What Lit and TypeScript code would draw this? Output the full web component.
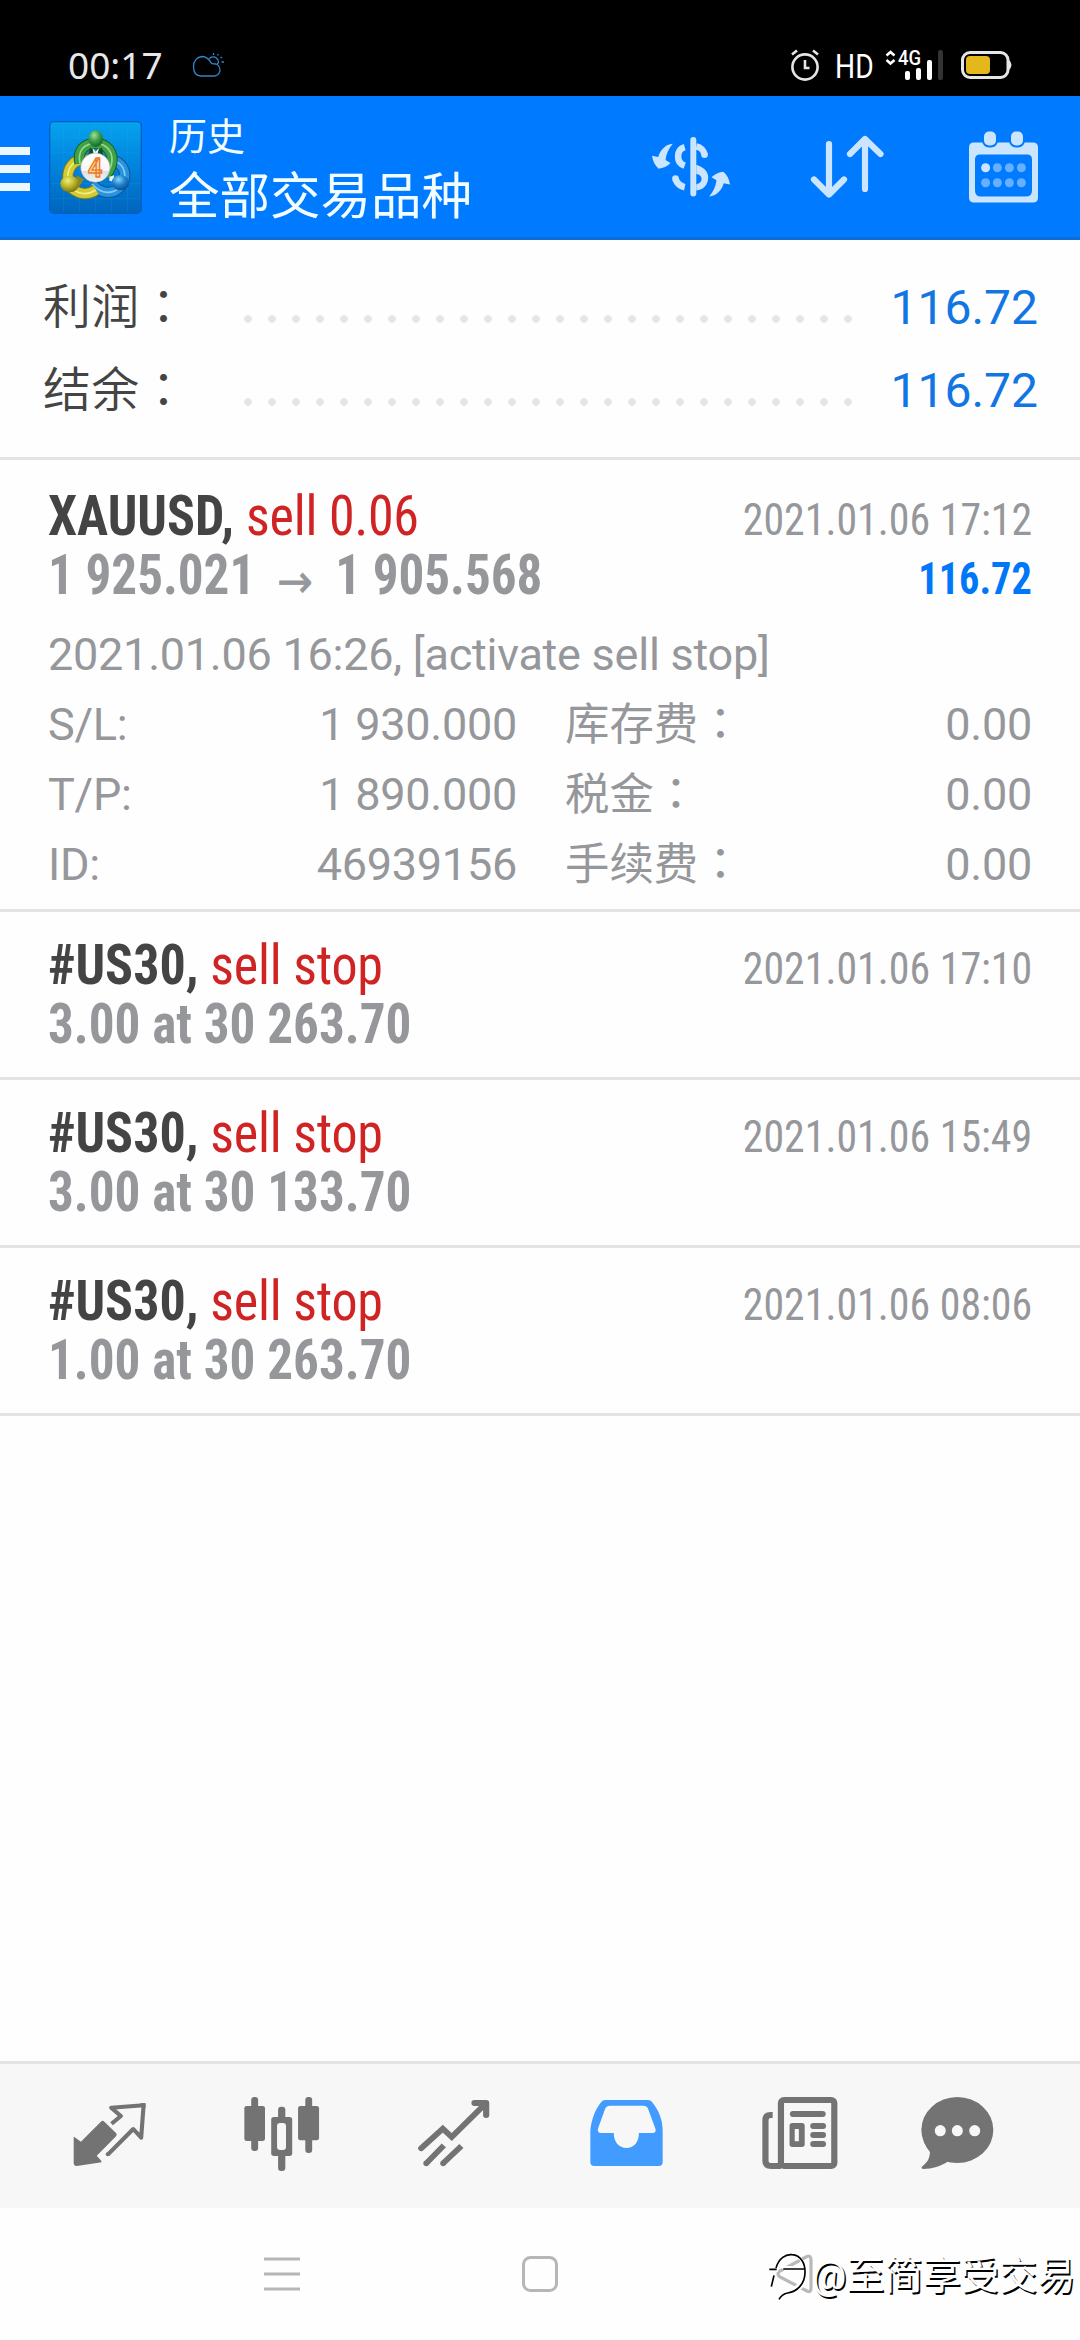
import { LitElement, html, css, svg, nothing } from "lit";
import { customElement, property } from "lit/decorators.js";

interface Order {
  symbol: string;
  action: string;
  price: string;
  time: string;
  profit?: string;
  target?: string;
}

const orders: Order[] = [
  { symbol: "#US30,", action: "sell stop", price: "3.00 at 30 263.70", time: "2021.01.06 17:10" },
  { symbol: "#US30,", action: "sell stop", price: "3.00 at 30 133.70", time: "2021.01.06 15:49" },
  { symbol: "#US30,", action: "sell stop", price: "1.00 at 30 263.70", time: "2021.01.06 08:06" },
];

const base = css`
  :host { display: block; font-family: Roboto, "Noto Sans CJK SC", sans-serif; }
  * { box-sizing: border-box; }
  svg { display: block; flex: none; overflow: visible; }
`;

@customElement("status-bar")
class StatusBar extends LitElement {
  static styles = [base, css`
    .bar { height: 96px; background: #000; display: flex; align-items: center; padding: 34px 69px 0 68px; color: #e8e8e8; }
    .time { font: 37px/62px "Noto Sans", sans-serif; width: 97px; margin-right: 27px; }
    .right { margin-left: auto; display: flex; align-items: center; }
    .hd { width: 36px; margin: 2px 14px 0 16px; color: #fff; font-size: 34px; line-height: 40px; }
    .hd span { display: inline-block; transform: scaleX(0.83); transform-origin: 0 50%; }
    .g { font: 500 20px Roboto, sans-serif; fill: #fff; }
    .battery { margin-left: 18px; }
  `];
  render() {
    return html`<div class="bar">
      <span class="time">00:17</span>
      <svg width="33" height="26" viewBox="0 0 33 26" fill="none" stroke="#2f86c6" stroke-width="1.3">
        <path d="M9 24 C4 24 1.5 20 1.5 14.5 C1.5 9 5 5 10 4.500 C14 4.500 16 6.500 18 9 C19 12 21 12 24 12 C27 13 28 16 28 19 C27 22 25 24 22 24Z"/>
        <path d="M17 7 C19 4 24 4 26 8 C27 10 26 12 25 12 M21.500 1 V3 M26.500 2 L25.500 3.500 M30 5 L28.500 6 M29.500 10 H32"/>
      </svg>
      <div class="right">
        <svg width="28" height="32" viewBox="0 0 28 32" fill="none" stroke="#e6e6e6" stroke-width="2.600">
          <circle cx="14" cy="18" r="12.600"/>
          <path d="M14 11 V19 H18.500 M1 5.500 L6 1.500 M27 5.500 L22 1.500"/>
        </svg>
        <div class="hd"><span>HD</span></div>
        <svg width="58" height="32" viewBox="0 0 58 32">
          <path d="M1.500 6.500 L5.500 3 L9.500 6.500 M1.500 11 L5.500 14.500 L9.500 11" fill="none" stroke="#fff" stroke-width="2.600"/>
          <text class="g" x="13" y="16" textLength="23" lengthAdjust="spacingAndGlyphs">4G</text>
          <rect x="20" y="22" width="5" height="9" rx="2" fill="#fff"/>
          <rect x="31" y="19" width="5" height="12" rx="2" fill="#fff"/>
          <rect x="42" y="11" width="5" height="20" rx="2" fill="#fff"/>
          <rect x="53" y="1" width="5" height="30" rx="2" fill="#333"/>
        </svg>
        <svg class="battery" width="50" height="28" viewBox="0 0 50 28">
          <rect x="1.500" y="1.500" width="45.500" height="25" rx="7.500" fill="none" stroke="#e6e6e6" stroke-width="3"/>
          <path d="M47.500 8.500 Q50.500 11 50.500 14 Q50.500 17 47.500 19.500Z" fill="#e6e6e6"/>
          <rect x="5" y="5" width="24" height="18" rx="4" fill="#e4b71c"/>
        </svg>
      </div>
    </div>`;
  }
}

@customElement("app-header")
class AppHeader extends LitElement {
  static styles = [base, css`
    .header { height: 144px; background: #007aff; border-bottom: 3px solid #0b6dd8; display: flex; align-items: center; color: #f2fdff; }
    .menu { width: 30px; display: flex; flex-direction: column; gap: 10px; margin: 5px 19px 0 0; }
    .menu i { height: 8px; background: #ecf7ff; }
    .titles { align-self: flex-start; margin: 12px 0 0 27px; display: flex; flex-direction: column; white-space: nowrap; width: 483px; }
    .sub { font-size: 38px; line-height: 58px; }
    .main { font-size: 50.500px; line-height: 62px; }
    .logo { margin-top: 1px; }
    .four { font: 700 75px Roboto, sans-serif; fill: #fcd9ab; stroke: #ee7a1e; stroke-width: 4px; }
    .sort { margin: 0 85px 0 80px; }
  `];
  render() {
    const ribbon = (d: string, dark: string, mid: string, light: string) => svg`
      <path d=${d} stroke=${dark} stroke-width="34"/>
      <path d=${d} stroke=${mid} stroke-width="28"/>
      <path d=${d} stroke=${light} stroke-width="5" stroke-opacity=".75"/>`;
    const arrow = "M96 54 C74 56 58 72 52 94 L33 90 C35 106 42 120 53 129 C66 128 80 122 89 112 L74 103 C76 84 84 68 96 54Z";
    return html`<div class="header">
      <div class="menu"><i></i><i></i><i></i></div>
      <svg class="logo" width="93" height="93" viewBox="27 29 279 279">
        <defs>
          <linearGradient id="bg" x1="0" y1="0" x2="0" y2="1"><stop offset="0" stop-color="#06a3ee"/><stop offset=".5" stop-color="#0082dc"/><stop offset="1" stop-color="#0065bd"/></linearGradient>
          <radialGradient id="gr" cx=".4" cy=".3" r=".7"><stop offset="0" stop-color="#9be39a"/><stop offset=".5" stop-color="#3fa14c"/><stop offset="1" stop-color="#17642b"/></radialGradient>
          <radialGradient id="ye" cx=".4" cy=".3" r=".7"><stop offset="0" stop-color="#f1ee7c"/><stop offset=".5" stop-color="#bfb82c"/><stop offset="1" stop-color="#77751a"/></radialGradient>
          <radialGradient id="bl" cx=".4" cy=".3" r=".7"><stop offset="0" stop-color="#8bd4fb"/><stop offset=".5" stop-color="#2187cf"/><stop offset="1" stop-color="#0a4f94"/></radialGradient>
          <linearGradient id="wh" x1="0" y1="0" x2="0" y2="1"><stop offset="0" stop-color="#fff"/><stop offset=".6" stop-color="#f6f6f6"/><stop offset=".62" stop-color="#dedede"/><stop offset="1" stop-color="#f4f4f4"/></linearGradient>
        </defs>
        <rect x="29" y="31" width="275" height="275" rx="13" fill="url(#bg)" stroke="#0560bd" stroke-width="4"/>
        <path d="M70 33 V304 M118 33 V304 M167 33 V304 M215 33 V304 M262 33 V304 M31 78 H302 M31 124 H302 M31 170 H302 M31 216 H302 M31 262 H302" stroke="#35a8ee" stroke-opacity=".25" stroke-width="2"/>
        <g fill="none">
          ${ribbon("M216 146 C258 158 262 196 244 222 C222 252 184 250 156 218", "#0c559c", "#2a93dd", "#a5e2ff")}
          ${ribbon("M140 146 C100 140 80 172 84 206 C92 244 134 258 168 236", "#7d7a17", "#d3cb34", "#fdfaa0")}
          ${ribbon("M120 156 C112 118 132 96 168 96 C204 98 222 126 214 160 C210 176 204 184 196 190", "#146128", "#3fa046", "#b4eaa6")}
        </g>
        <path d="M150 108 L167 124 L186 108 L190 134 H144Z" fill="#164f25"/>
        <path d="M158 110 L167 121 L177 110 L172 130 H161Z" fill="#f4f8f4"/>
        <path d="M110 192 L132 204 L120 222 L102 240Z" fill="#8a871c"/>
        <path d="M208 196 L222 192 L224 212 L208 208Z" fill="#e8f2fa"/>
        <ellipse cx="167" cy="82" rx="22" ry="25" fill="url(#gr)"/>
        <ellipse cx="89" cy="218" rx="28" ry="25" fill="url(#ye)"/>
        <ellipse cx="241" cy="214" rx="26" ry="23" fill="url(#bl)"/>
        <circle cx="166" cy="169" r="44" fill="url(#wh)" stroke="#7d8a80" stroke-opacity=".6" stroke-width="2"/>
        <text class="four" x="144" y="196">4</text>
      </svg>
      <div class="titles"><span class="sub">历史</span><span class="main">全部交易品种</span></div>
      <svg width="78" height="62" viewBox="33 32 236 184" fill="#cbe5ff">
        <rect x="149" y="33" width="18" height="180" rx="9"/>
        <g fill="none" stroke="#cbe5ff" stroke-width="20">
          <path d="M132 64 C118 68 112 80 112 92 C112 106 120 116 132 120"/>
          <path d="M104 160 C108 172 118 182 132 185"/>
          <path d="M167 62 C180 64 190 74 192 87"/>
        </g>
        <circle cx="104" cy="159" r="10"/><circle cx="192" cy="87" r="10"/>
        <path d="M167 117 C190 124 203 138 203 155 C203 178 188 194 167 195 V176 C178 173 183 168 183 160 C183 152 176 146 167 145Z"/>
        <path d=${arrow}/><path d=${arrow} transform="rotate(180 151 133.500)"/>
      </svg>
      <svg class="sort" width="74" height="64" viewBox="809 136 74 64" fill="none" stroke="#cbe5ff" stroke-width="6.200" stroke-linecap="round" stroke-linejoin="round">
        <path d="M828 145 V195 M813 180.500 L828 195.500 L843 180.500 M864 190 V140 M849 155 L864 140 L879.500 155"/>
      </svg>
      <svg width="70" height="72" viewBox="968 130.500 70 72">
        <path fill="#cbe5ff" fill-rule="evenodd" d="M973 142 H1032 Q1037 142 1037 147 V197 Q1037 202 1032 202 H973 Q968 202 968 197 V147 Q968 142 973 142Z M979 154 Q974 154 974 159 V190 Q974 196 980 196 H1025 Q1031 196 1031 190 V159 Q1031 154 1026 154Z"/>
        <rect x="982" y="130" width="14" height="16" rx="6" fill="#cbe5ff" stroke="#007aff" stroke-width="2"/>
        <rect x="1009" y="130" width="14" height="16" rx="6" fill="#cbe5ff" stroke="#007aff" stroke-width="2"/>
        ${[984.6, 996.4, 1008.4, 1020.4].map((x, i) => svg`<circle cx=${x} cy="167.300" r="4.500" fill=${i ? "#66b0ff" : "#cbe5ff"}/><circle cx=${x} cy="182.300" r="4.500" fill="#66b0ff"/>`)}
      </svg>
    </div>`;
  }
}

@customElement("history-summary")
class HistorySummary extends LitElement {
  static styles = [base, css`
    .box { padding: 26px 42px 25px 43px; border-bottom: 3px solid #e4e4e4; font-size: 48px; line-height: 83px; }
    .row { display: flex; height: 83px; }
    .label { width: 193px; color: #444; white-space: nowrap; letter-spacing: 0.2px; font-weight: 350; }
    .colon { font-family: "Noto Sans CJK TC"; line-height: 0; }
    .dots { width: 624px; background: radial-gradient(circle at 12px 53px, #e5e5e5 3.400px, transparent 4.200px) 0 0 / 24px 83px repeat-x; }
    .value { margin-left: auto; color: #1276e2; }
  `];
  render() {
    return html`<div class="box">${["利润", "结余"].map((t) => html`
      <div class="row"><span class="label">${t}<span class="colon">：</span></span><span class="dots"></span><span class="value">116.72</span></div>`)}
    </div>`;
  }
}

@customElement("order-item")
class OrderItem extends LitElement {
  @property({ attribute: false }) order!: Order;
  static styles = [base, css`
    .item { padding: 24px 48px 23px; border-bottom: 3px solid #e4e4e4; color: #95979b; }
    .full { padding: 27px 48px 9px; }
    .row { display: flex; justify-content: space-between; height: 59px; line-height: 59px; align-items: baseline; white-space: pre; font-family: "Roboto Condensed", Roboto, sans-serif; font-stretch: 75%; font-size: 55px; }
    .row > span { display: block; transform: scaleX(0.93); transform-origin: 0 50%; }
    .row > .name { transform: scaleX(0.945); }
    .symbol, .price, .profit { font-weight: 700; }
    .symbol { color: #444; }
    .action { color: #d02424; letter-spacing: -0.2px; }
    .row > .small { font-size: 45px; transform-origin: 100% 50%; }
    .row > .profit { color: #0077f8; transform: scaleX(0.895); }
    .full .price { letter-spacing: -0.05px; }
    .arrow { display: inline-block; width: 86px; text-align: center; font: 400 46px/1px "DejaVu Sans"; vertical-align: -3px; -webkit-text-stroke: 0.6px #95979b; }
    .details { margin-top: 15px; font-size: 45px; line-height: 70px; letter-spacing: -0.25px; }
    .grid { display: grid; grid-template-columns: 130px 339px 190px 1fr; }
    .grid span { white-space: nowrap; height: 70px; }
    .num { text-align: right; }
    .cjk { padding-left: 48px; font-size: 44.400px; letter-spacing: 0; }
    .colon { font-family: "Noto Sans CJK TC"; line-height: 0; }
  `];
  render() {
    const o = this.order;
    const cell = (l: string, v: string, c: string) => html`
      <span>${l}</span><span class="num">${v}</span><span class="cjk">${c}<span class="colon">：</span></span><span class="num">0.00</span>`;
    return html`<div class="item ${o.target ? "full" : ""}">
      <div class="row"><span class="name"><span class="symbol">${o.symbol}</span> <span class="action">${o.action}</span></span><span class="small">${o.time}</span></div>
      <div class="row"><span class="price">${o.price}${o.target ? html`<span class="arrow">→</span>${o.target}` : nothing}</span>${o.profit ? html`<span class="small profit">${o.profit}</span>` : nothing}</div>
      ${o.target ? html`<div class="details">
        <div>2021.01.06 16:26, [activate sell stop]</div>
        <div class="grid">
          ${cell("S/L:", "1 930.000", "库存费")}${cell("T/P:", "1 890.000", "税金")}${cell("ID:", "46939156", "手续费")}
        </div>
      </div>` : nothing}
    </div>`;
  }
}

@customElement("tab-bar")
class TabBar extends LitElement {
  static styles = [base, css`
    .tabs { height: 147px; border-top: 3px solid #e4e4e4; background: #f7f7f7; display: grid; grid-template-columns: 172px 171px 173px 173px 174px 141px; padding: 0 0 4px 24px; align-items: center; justify-items: center; }
  `];
  render() {
    // Artwork is drawn on a 2.904 x 3 unit-per-pixel grid.
    const icon = (x: number, w: number, body: unknown) => html`
      <svg width=${w / 2.9037} height="76" viewBox="${x} 168 ${w} 228" preserveAspectRatio="none" fill="#737373">${body}</svg>`;
    return html`<div class="tabs">
      ${icon(213, 213, svg`
        <path d="M215 291 Q217 290 220 293 L236 305 L294 245 Q299 240 304 245 L338 279 Q342 284 338 289 L282 347 L295 362 L296 367 L224 378 Q215 378 215 369Z"/>
        <path d="M325 251 L352 228 L324 203 L418 195.500 L411 293 L388 267 L314 344" fill="none" stroke="#737373" stroke-width="12" stroke-linejoin="round"/>
        <path d="M408 190 L424 189 L423 204Z"/><circle cx="314" cy="343" r="6"/>`)}
      ${icon(708, 219, svg`
        <rect x="729" y="171" width="20" height="162" rx="9"/><rect x="709" y="198" width="60" height="105" rx="7"/>
        <rect x="807" y="200" width="21" height="60" rx="9"/><rect x="807" y="320" width="21" height="73" rx="9"/>
        <rect x="787" y="231" width="61" height="117" rx="8"/><rect x="804" y="249" width="26" height="81" rx="9" fill="#f7f7f7"/>
        <rect x="886" y="171" width="20" height="168" rx="9"/><rect x="865" y="198" width="61" height="103" rx="7"/>`)}
      ${icon(1213, 208, svg`<g fill="none" stroke="#737373" stroke-width="17" stroke-linejoin="round">
        <path d="M1222 325 L1285 266 L1311 291 L1408 192" stroke-linecap="round" stroke-linejoin="miter"/>
        <path d="M1377 189 H1411 V225" stroke-linecap="round" stroke-width="18"/>
        <path d="M1237 370 L1288 316 M1286 370 L1339 318"/></g><circle cx="1237" cy="370" r="8.500"/><circle cx="1286" cy="370" r="8.500"/>`)}
      ${icon(145, 212, svg`<path fill="#429bff" fill-rule="evenodd" d="M190 180 H313 Q321 180 326 187 C345 212 356 240 356 272 V366 Q356 378 344 378 H158 Q146 378 146 366 V272 C149 238 160 210 177 187 Q182 180 190 180Z M203 197 Q193 197 189 206 L168 266 Q166 279 178 279 H214 C214 305 228 324 251 324 C274 324 287 305 287 279 H326 Q338 279 335 266 L313 205 Q310 197 300 197Z"/>`)}
      ${icon(645, 220, svg`<g fill="none" stroke="#737373" stroke-width="18">
        <rect x="700" y="180" width="155" height="198" rx="9"/><path d="M676 225 H670 Q655 225 655 240 V362 Q655 378 672 378 H700"/></g>
        <rect x="726" y="213" width="104" height="18" rx="9"/>
        <path fill-rule="evenodd" d="M733 249 H761 Q769 249 769 257 V313 Q769 321 761 321 H733 Q725 321 725 313 V257 Q725 249 733 249Z M740 267 V304 H752 V267Z"/>
        <rect x="785" y="249" width="46" height="18" rx="9"/><rect x="785" y="276" width="46" height="18" rx="9"/><rect x="785" y="303" width="46" height="18" rx="9"/>`)}
      ${icon(1108, 211, svg`<ellipse cx="1213.500" cy="270" rx="104.500" ry="99"/>
        <path d="M1122 318 L1134 336 C1133 352 1130 364 1113 378 Q1106 384 1114 387 C1142 387 1165 378 1184 366 L1215 350Z"/>
        <g fill="#f7f7f7"><ellipse cx="1164" cy="272" rx="16" ry="17"/><ellipse cx="1213.500" cy="272" rx="16" ry="17"/><ellipse cx="1264" cy="272" rx="16" ry="17"/></g>`)}
    </div>`;
  }
}

@customElement("system-nav")
class SystemNav extends LitElement {
  static styles = [base, css`
    .nav { position: relative; height: 132px; background: #fefefe; display: flex; align-items: center; padding-left: 264px; }
    .home { margin: 0 218px 0 222px; }
    .mark { position: absolute; left: 768px; top: 46px; display: flex; align-items: center; height: 44px; white-space: nowrap; color: #fff; font-size: 38.200px; line-height: 44px; text-shadow: 1.500px 1.500px 0 #000; }
    .mark span { margin-left: 4px; }
  `];
  render() {
    const d = "M110 128 C118 98 140 86 158 88 C185 90 198 115 197 142 C196 175 175 198 145 203 Q128 206 119 222 M90 132 H112 M132 131 H197 M104 150 L96 184";
    return html`<div class="nav">
      <svg width="36" height="34" viewBox="0 0 36 34"><path d="M0 2 H36 M0 17 H36 M0 32 H36" stroke="#b6b6b6" stroke-width="3"/></svg>
      <svg class="home" width="36" height="36"><rect x="1.500" y="1.500" width="33" height="33" rx="7" fill="none" stroke="#b6b6b6" stroke-width="3"/></svg>
      <svg width="37" height="40" viewBox="0 0 37 40"><path d="M4 17 L31 2.500 Q35 1 35 6 V34 Q35 39 31 37 L4 23 Q0 20 4 17Z" fill="none" stroke="#b9b9b9" stroke-width="3.200"/></svg>
      <div class="mark">
        <svg width="40" height="48" viewBox="86 80 120 144" fill="none">
          <path d=${d} stroke="#fff" stroke-width="8" transform="translate(-4 -5)"/>
          <path d=${d} stroke="#fff" stroke-width="8" transform="translate(3 4)"/>
          <path d=${d} stroke="#000" stroke-width="5"/>
        </svg>
        <span>@至简享受交易</span>
      </div>
    </div>`;
  }
}

@customElement("app-root")
class AppRoot extends LitElement {
  static styles = [base, css`
    :host { width: 1080px; height: 2340px; background: #fefefe; }
    .page { height: 2340px; display: flex; flex-direction: column; overflow: hidden; }
    .list { flex: 1; }
  `];
  render() {
    const first: Order = { symbol: "XAUUSD,", action: "sell 0.06", price: "1 925.021", target: "1 905.568", time: "2021.01.06 17:12", profit: "116.72" };
    return html`<div class="page">
      <status-bar></status-bar>
      <app-header></app-header>
      <history-summary></history-summary>
      <div class="list">${[first, ...orders].map((o) => html`<order-item .order=${o}></order-item>`)}</div>
      <tab-bar></tab-bar>
      <system-nav></system-nav>
    </div>`;
  }
}
